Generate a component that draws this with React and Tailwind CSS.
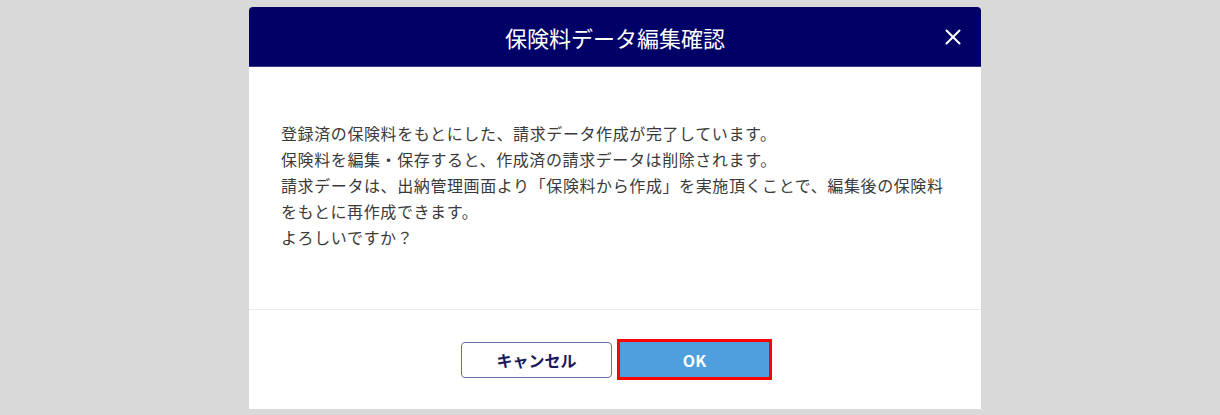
import { X } from 'lucide-react'

const lines = [
  '登録済の保険料をもとにした、請求データ作成が完了しています。',
  '保険料を編集・保存すると、作成済の請求データは削除されます。',
  '請求データは、出納管理画面より「保険料から作成」を実施頂くことで、編集後の保険料',
  'をもとに再作成できます。',
  'よろしいですか？',
]

export default function App() {
  return (
    <div
      className="h-[415px] w-full bg-[#d9d9d9] flex justify-center pl-[10px] pt-[7px]"
      style={{ fontFamily: '"Noto Sans CJK JP", "Noto Sans", sans-serif' }}
    >
      <div className="w-[732px] h-[402px] bg-white rounded-t-[4px] flex flex-col overflow-hidden">
        {/* Header */}
        <div className="h-[60px] bg-[#000066] border-b border-[#3a3a8c] relative flex items-center justify-center">
          <h1 className="text-white text-[22px] leading-none">保険料データ編集確認</h1>
          <button className="absolute right-[15px] top-1/2 -translate-y-1/2 text-white">
            <X size={26} strokeWidth={1.9} />
          </button>
        </div>

        {/* Body */}
        <div className="px-[32px] pt-[53px] pb-[59px] text-[16px] leading-[26px] tracking-[0.6px] text-[#3a3a3a] whitespace-nowrap border-b border-[#ebebeb]">
          {lines.map((l, i) => (
            <p key={i}>{l}</p>
          ))}
        </div>

        {/* Footer */}
        <div className="flex-1 flex items-center justify-center gap-[8px]">
          <button className="w-[151px] h-[36px] rounded-[4px] border border-[#6b6ba8] bg-white text-[#1a1a5c] font-bold text-[16px]">
            キャンセル
          </button>
          <button className="w-[149px] h-[35px] bg-[#4f9fdf] text-white font-bold text-[16px] outline-[3px] outline-solid outline-[#ff0000]">
            OK
          </button>
        </div>
      </div>
    </div>
  )
}
